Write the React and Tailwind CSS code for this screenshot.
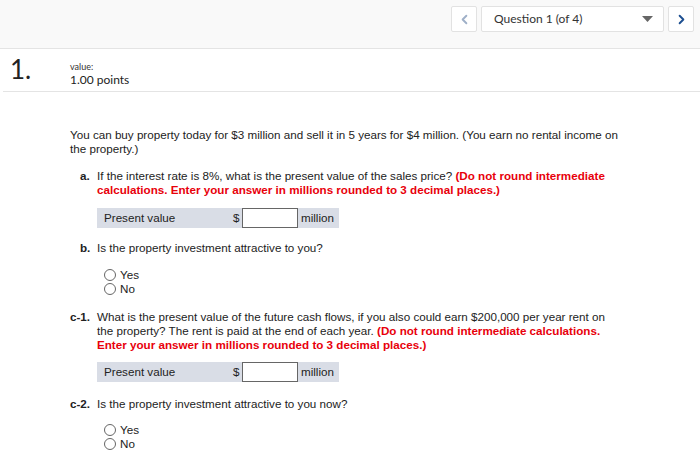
import { FiChevronLeft, FiChevronRight } from "react-icons/fi";

function Radio({ label }) {
  return (
    <label className="flex items-center gap-[4px] h-[14px]">
      <span className="w-[12px] h-[12px] rounded-full border border-[#666] bg-white" />
      <span>{label}</span>
    </label>
  );
}

function AnswerRow() {
  return (
    <div className="flex items-center w-[242px] h-[20px] bg-[#d9dde6]">
      <span className="pl-[7px] w-[136px]">Present value</span>
      <span className="w-[9px]">$</span>
      <span className="w-[56px] h-[20px] bg-white border border-[#666]" />
      <span className="pl-[3px]">million</span>
    </div>
  );
}

export default function App() {
  return (
    <div className="w-[700px] h-[476px] bg-white overflow-hidden">
      {/* top nav */}
      <div className="h-[49px] bg-[#f9f9f9] border-b border-[#e4e4e4] flex justify-end items-start pt-[6px] pr-[6px] gap-[4px] font-['Lato',sans-serif]">
        <button className="w-[26px] h-[26px] bg-white border border-[#e2e2e2] rounded-[2px] flex items-center justify-center text-[#9fb0c8]">
          <FiChevronLeft size={15} strokeWidth={3} />
        </button>
        <div className="w-[183px] h-[26px] bg-white border border-[#e2e2e2] rounded-[2px] flex items-center justify-between pl-[12px] pr-[10px] text-[12px] text-[#333]">
          <span>Question 1 (of 4)</span>
          <svg width="11" height="6" viewBox="0 0 11 6">
            <path d="M0 0 L11 0 L5.5 6 Z" fill="#666" />
          </svg>
        </div>
        <button className="w-[26px] h-[26px] bg-white border border-[#e2e2e2] rounded-[2px] flex items-center justify-center text-[#1d4f91]">
          <FiChevronRight size={15} strokeWidth={3} />
        </button>
      </div>

      {/* question header */}
      <div className="ml-[3px] h-[43px] border-b border-[#e4e4e4] flex items-start font-['Lato',sans-serif] text-[#222]">
        <div className="w-[67px] pl-[7px] pt-[5px] text-[26px] leading-[30px]">1.</div>
        <div className="pt-[12px]">
          <div className="text-[9px] leading-[12px] text-[#333]">value:</div>
          <div className="text-[12px] leading-[14px]">1.00 points</div>
        </div>
      </div>

      {/* body */}
      <div className="pl-[70px] pt-[36px] font-['Liberation_Sans',Arial,sans-serif] text-[11.65px] leading-[14px] text-[#222]">
        <p className="w-[600px]">
          You can buy property today for $3 million and sell it in 5 years for $4 million. (You earn no rental income on
          <br />
          the property.)
        </p>

        <div className="flex mt-[13px]">
          <span className="w-[27px] pl-[10px] font-bold">a.</span>
          <p className="w-[580px]">
            If the interest rate is 8%, what is the present value of the sales price?{" "}
            <span className="font-bold text-[#e8000b]">
              (Do not round intermediate
              <br />
              calculations. Enter your answer in millions rounded to 3 decimal places.)
            </span>
          </p>
        </div>
        <div className="ml-[27px] mt-[11px]">
          <AnswerRow />
        </div>

        <div className="flex mt-[13px]">
          <span className="w-[27px] pl-[10px] font-bold">b.</span>
          <p>Is the property investment attractive to you?</p>
        </div>
        <div className="ml-[34px] mt-[13px]">
          <Radio label="Yes" />
          <Radio label="No" />
        </div>

        <div className="flex mt-[14px]">
          <span className="w-[27px] font-bold">c-1.</span>
          <p className="w-[580px]">
            What is the present value of the future cash flows, if you also could earn $200,000 per year rent on
            <br />
            the property? The rent is paid at the end of each year.{" "}
            <span className="font-bold text-[#e8000b]">
              (Do not round intermediate calculations.
              <br />
              Enter your answer in millions rounded to 3 decimal places.)
            </span>
          </p>
        </div>
        <div className="ml-[27px] mt-[10px]">
          <AnswerRow />
        </div>

        <div className="flex mt-[15px]">
          <span className="w-[27px] font-bold">c-2.</span>
          <p>Is the property investment attractive to you now?</p>
        </div>
        <div className="ml-[34px] mt-[12px]">
          <Radio label="Yes" />
          <Radio label="No" />
        </div>
      </div>
    </div>
  );
}
